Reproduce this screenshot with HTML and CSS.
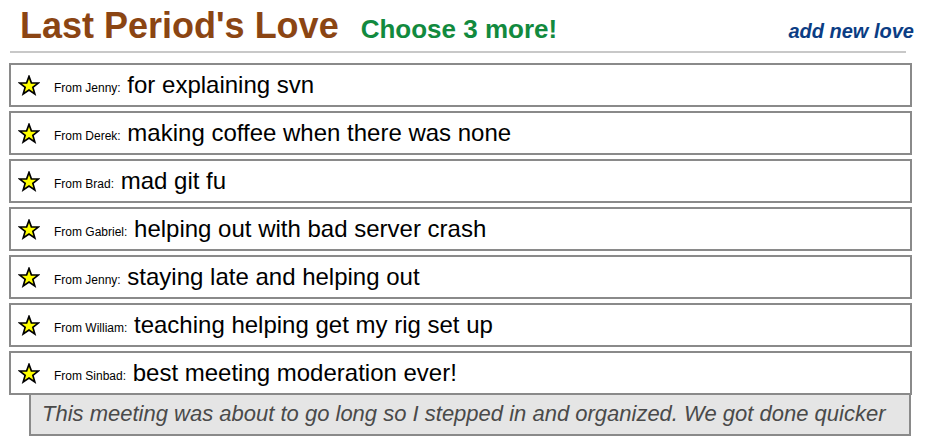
FILE: index.html
```html
<!DOCTYPE html>
<html>
<head>
<meta charset="utf-8">
<link rel="stylesheet" href="styles.css">
</head>
<body>
<div class="page">
  <div class="header">
    <h1 class="title">Last Period's Love</h1>
    <span class="choose">Choose 3 more!</span>
    <a class="add" href="#">add new love</a>
  </div>
  <div class="rule"></div>
  <ul class="loves">
    <li class="love"><svg class="star" viewBox="0 0 24 23"><polygon points="12,1.5 14.6,8.6 22.2,8.8 16.2,13.4 18.4,20.8 12,16.5 5.6,20.8 7.8,13.4 1.8,8.8 9.4,8.6"/></svg><span class="from">From Jenny:</span> for explaining svn</li>
    <li class="love"><svg class="star" viewBox="0 0 24 23"><polygon points="12,1.5 14.6,8.6 22.2,8.8 16.2,13.4 18.4,20.8 12,16.5 5.6,20.8 7.8,13.4 1.8,8.8 9.4,8.6"/></svg><span class="from">From Derek:</span> making coffee when there was none</li>
    <li class="love"><svg class="star" viewBox="0 0 24 23"><polygon points="12,1.5 14.6,8.6 22.2,8.8 16.2,13.4 18.4,20.8 12,16.5 5.6,20.8 7.8,13.4 1.8,8.8 9.4,8.6"/></svg><span class="from">From Brad:</span> mad git fu</li>
    <li class="love"><svg class="star" viewBox="0 0 24 23"><polygon points="12,1.5 14.6,8.6 22.2,8.8 16.2,13.4 18.4,20.8 12,16.5 5.6,20.8 7.8,13.4 1.8,8.8 9.4,8.6"/></svg><span class="from">From Gabriel:</span> helping out with bad server crash</li>
    <li class="love"><svg class="star" viewBox="0 0 24 23"><polygon points="12,1.5 14.6,8.6 22.2,8.8 16.2,13.4 18.4,20.8 12,16.5 5.6,20.8 7.8,13.4 1.8,8.8 9.4,8.6"/></svg><span class="from">From Jenny:</span> staying late and helping out</li>
    <li class="love"><svg class="star" viewBox="0 0 24 23"><polygon points="12,1.5 14.6,8.6 22.2,8.8 16.2,13.4 18.4,20.8 12,16.5 5.6,20.8 7.8,13.4 1.8,8.8 9.4,8.6"/></svg><span class="from">From William:</span> teaching helping get my rig set up</li>
    <li class="love last"><svg class="star" viewBox="0 0 24 23"><polygon points="12,1.5 14.6,8.6 22.2,8.8 16.2,13.4 18.4,20.8 12,16.5 5.6,20.8 7.8,13.4 1.8,8.8 9.4,8.6"/></svg><span class="from">From Sinbad:</span> best meeting moderation ever!</li>
  </ul>
  <div class="comment">This meeting was about to go long so I stepped in and organized. We got done quicker</div>
</div>
</body>
</html>
```

FILE: styles.css
```css
html, body {
  margin: 0;
  padding: 0;
  background: #fff;
}

body {
  font-family: "Liberation Sans", Arial, sans-serif;
  color: #000;
}

.page {
  width: 903px;
  padding-left: 9px;
}

.header {
  display: flex;
  align-items: baseline;
  height: 40px;
  padding: 6px 0 0 11px;
  margin-right: -2px;
  line-height: 40px;
}

.title {
  margin: 0;
  font-size: 36px;
  font-weight: bold;
  color: #8b4513;
}

.choose {
  margin-left: 22px;
  font-size: 26px;
  font-weight: bold;
  color: #128a3e;
}

.add {
  margin-left: auto;
  font-size: 20px;
  font-weight: bold;
  font-style: italic;
  color: #0b3d84;
  text-decoration: none;
}

.rule {
  height: 2px;
  margin: 5px 6px 0 1px;
  background: #c8c8c8;
}

.loves {
  list-style: none;
  margin: 10px 0 0 0;
  padding: 0;
}

.love {
  display: flex;
  align-items: center;
  height: 40px;
  border: 2px solid #8a8a8a;
  margin-bottom: 4px;
  padding-left: 7px;
  font-size: 24px;
  white-space: pre;
}

.love.last {
  margin-bottom: 0;
}

.star {
  width: 22px;
  height: 21px;
  margin-right: 14px;
  flex: none;
}

.star polygon {
  fill: #ffff00;
  stroke: #000;
  stroke-width: 1.8;
  stroke-linejoin: miter;
}

.from {
  font-size: 12px;
  position: relative;
  top: 3px;
}

.comment {
  margin: 0 1px 0 20px;
  border: 2px solid #8a8a8a;
  border-top: none;
  background: #e5e5e5;
  padding: 7px 0 9px 11px;
  line-height: 23px;
  font-size: 22px;
  font-style: italic;
  color: #4a4a4a;
  white-space: nowrap;
}
```
